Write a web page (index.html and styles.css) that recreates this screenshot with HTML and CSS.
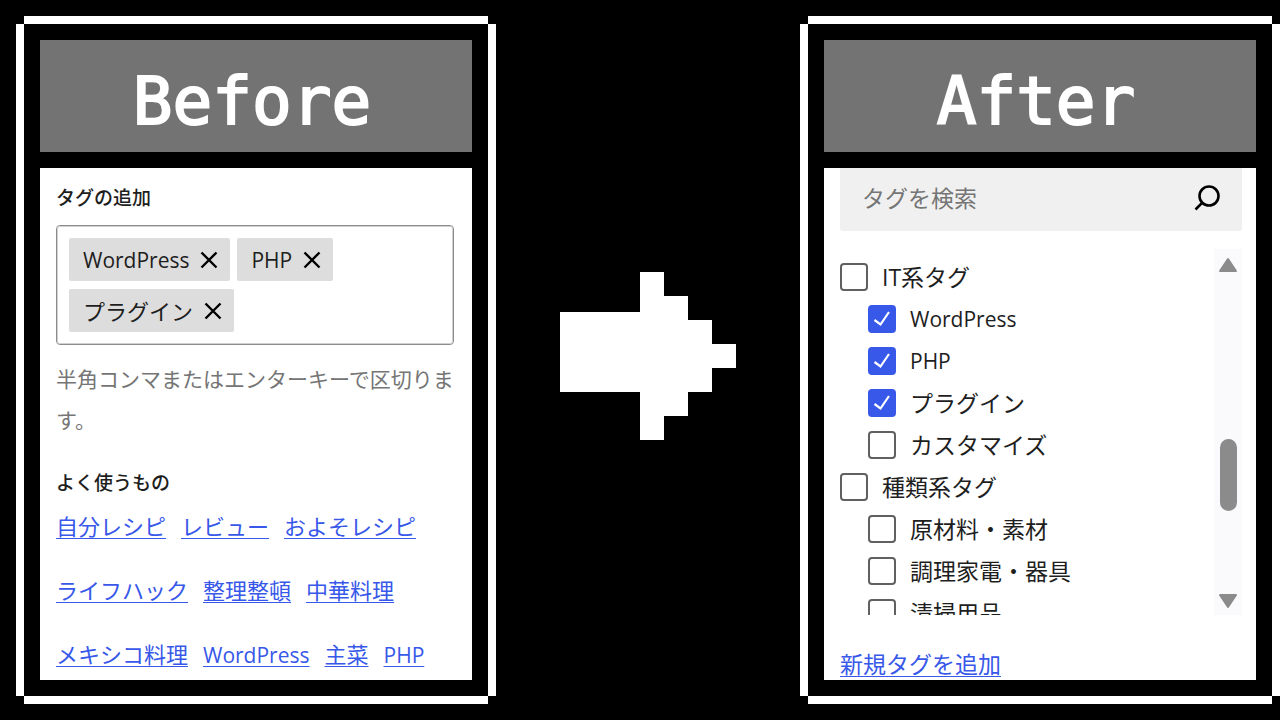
FILE: index.html
```
<!DOCTYPE html>
<html lang="ja">
<head>
  <meta charset="UTF-8">
  <meta name="viewport" content="width=device-width, initial-scale=1.0">
  <title>Before / After</title>
  <link rel="stylesheet" href="styles.css">
</head>
<body>
  <main class="compare">
    <section class="card">
      <h1 class="card-title">Before</h1>
      <div class="panel">
        <h2 class="label">タグの追加</h2>
        <div class="token-box">
          <span class="token latin">WordPress
            <button type="button" aria-label="WordPress を削除"><svg viewBox="0 0 18 18"><path d="M1.5 1.5l15 15M16.5 1.5l-15 15"/></svg></button>
          </span>
          <span class="token latin">PHP
            <button type="button" aria-label="PHP を削除"><svg viewBox="0 0 18 18"><path d="M1.5 1.5l15 15M16.5 1.5l-15 15"/></svg></button>
          </span>
          <span class="token">プラグイン
            <button type="button" aria-label="プラグイン を削除"><svg viewBox="0 0 18 18"><path d="M1.5 1.5l15 15M16.5 1.5l-15 15"/></svg></button>
          </span>
        </div>
        <p class="help">半角コンマまたはエンターキーで区切ります。</p>
        <h2 class="label">よく使うもの</h2>
        <div class="popular">
          <a href="#">自分レシピ</a>
          <a href="#">レビュー</a>
          <a href="#">およそレシピ</a>
          <a href="#">ライフハック</a>
          <a href="#">整理整頓</a>
          <a href="#">中華料理</a>
          <a href="#">メキシコ料理</a>
          <a class="latin" href="#">WordPress</a>
          <a href="#">主菜</a>
          <a class="latin" href="#">PHP</a>
        </div>
      </div>
    </section>

    <svg class="arrow" viewBox="0 0 22 21" shape-rendering="crispEdges" aria-hidden="true">
      <path d="M0 5h10V0h3v3h3v3h3v3h3v3h-3v3h-3v3h-3v3h-3v-6H0z"/>
    </svg>

    <section class="card">
      <h1 class="card-title">After</h1>
      <div class="panel panel-after">
        <form class="search">
          <input type="text" placeholder="タグを検索" aria-label="タグを検索">
          <button type="button" aria-label="検索">
            <svg viewBox="0 0 26 26"><circle cx="15" cy="11" r="9.5"/><path d="M8.3 17.7L1.5 24.5"/></svg>
          </button>
        </form>
        <div class="list-wrap">
          <ul class="list">
            <li><label><input type="checkbox">IT系タグ</label>
              <ul>
                <li><label class="latin"><input type="checkbox" checked>WordPress</label></li>
                <li><label class="latin"><input type="checkbox" checked>PHP</label></li>
                <li><label><input type="checkbox" checked>プラグイン</label></li>
                <li><label><input type="checkbox">カスタマイズ</label></li>
              </ul>
            </li>
            <li><label><input type="checkbox">種類系タグ</label>
              <ul>
                <li><label><input type="checkbox">原材料・素材</label></li>
                <li><label><input type="checkbox">調理家電・器具</label></li>
                <li><label><input type="checkbox">清掃用品</label></li>
              </ul>
            </li>
          </ul>
          <div class="scrollbar" aria-hidden="true">
            <svg viewBox="0 0 20 16"><path d="M10 2L18 14H2z"/></svg>
            <div class="track"><div class="thumb"></div></div>
            <svg viewBox="0 0 20 16"><path d="M2 2h16l-8 12z"/></svg>
          </div>
        </div>
        <a class="add-link" href="#">新規タグを追加</a>
      </div>
    </section>
  </main>
</body>
</html>
```
FILE: styles.css
```
* {
  box-sizing: border-box;
}

body {
  margin: 0;
  background-color: #000;
  color: #1e1e1e;
  font-family: "Open Sans", "Noto Sans CJK JP", sans-serif;
  font-size: 22px;
}

h1, h2, p, ul {
  margin: 0;
  padding: 0;
}

ul {
  list-style: none;
}

a {
  color: #3858e9;
  text-decoration: underline;
  text-decoration-thickness: 1px;
  text-underline-offset: 3px;
}

button {
  padding: 0;
  border: none;
  background: none;
  cursor: pointer;
}

.latin {
  font-size: 21px;
}

.compare {
  display: grid;
  grid-template-columns: 30fr 19fr 30fr;
  height: 100vh;
  padding: 16px 0 16px 16px;
}

/* white frame with the corner pixels cut off */
.card {
  display: flex;
  flex-direction: column;
  gap: 16px;
  min-width: 0;
  min-height: 0;
  padding: 16px;
  border: 8px solid #fff;
  clip-path: polygon(8px 0, calc(100% - 8px) 0, calc(100% - 8px) 8px, 100% 8px, 100% calc(100% - 8px), calc(100% - 8px) calc(100% - 8px), calc(100% - 8px) 100%, 8px 100%, 8px calc(100% - 8px), 0 calc(100% - 8px), 0 8px, 8px 8px);
}

.card-title {
  flex: none;
  padding: 12px 8px 0 0;
  background-color: #737373;
  color: #fff;
  font-family: "DejaVu Sans Mono", monospace;
  font-size: 66px;
  font-weight: normal;
  line-height: 100px;
  text-align: center;
  -webkit-text-stroke: 2px #fff;
}

.panel {
  flex: 1;
  min-height: 0;
  padding: 16px;
  overflow: hidden;
  background-color: #fff;
}

.label {
  font-size: 19px;
  font-weight: 500;
  line-height: 28px;
}

.token-box {
  display: flex;
  flex-wrap: wrap;
  gap: 8px 7px;
  margin: 13px 2px 14px 0;
  padding: 12px;
  border: 1px solid #8c8c8c;
  outline: 1px solid #d0d0d0;
  outline-offset: -2px;
  border-radius: 4px;
}

.token {
  display: flex;
  align-items: center;
  gap: 11px;
  height: 43px;
  padding: 0 12px 0 14px;
  border-radius: 2px;
  background-color: #ddd;
  line-height: 40px;
}

.token button {
  display: flex;
}

.token svg {
  width: 18px;
  height: 18px;
  fill: none;
  stroke: #000;
  stroke-width: 2.4;
}

.help {
  margin-bottom: 28px;
  color: #757575;
  font-size: 21px;
  line-height: 41px;
}

.popular {
  display: flex;
  flex-wrap: wrap;
  align-items: baseline;
  column-gap: 15px;
  margin-top: -3px;
  line-height: 64px;
}

.arrow {
  place-self: center;
  width: 176px;
  height: 168px;
  margin-bottom: 8px;
  fill: #fff;
}

.panel-after {
  padding-top: 0;
  font-size: 23px;
}

.search {
  display: flex;
  align-items: center;
  height: 63px;
  margin-right: -2px;
  padding: 0 22px 4px;
  border-radius: 0 0 3px 3px;
  background-color: #f0f0f0;
}

.search input {
  flex: 1;
  min-width: 0;
  padding: 0;
  border: none;
  outline: none;
  background: none;
  font: inherit;
}

.search input::placeholder {
  color: #757575;
}

.search button {
  display: flex;
}

.search svg {
  width: 26px;
  height: 26px;
  fill: none;
  stroke: #000;
  stroke-width: 2.6;
}

.list-wrap {
  display: flex;
  height: 366px;
  margin: 18px -2px 27px 0;
  overflow: hidden;
}

.list {
  flex: 1;
  padding-top: 7px;
}

.list ul {
  padding-left: 28px;
}

.list label {
  display: flex;
  align-items: center;
  gap: 14px;
  height: 42px;
  line-height: 40px;
}

.list input {
  -webkit-appearance: none;
  appearance: none;
  width: 28px;
  height: 28px;
  margin: 0;
  border: 2px solid #606060;
  border-radius: 4px;
}

.list input:checked {
  border-color: #3858e9;
  background: #3858e9 url("data:image/svg+xml,%3Csvg xmlns='http://www.w3.org/2000/svg' viewBox='0 0 24 24'%3E%3Cpath d='M4.5 13l6 4.5L19 5' fill='none' stroke='white' stroke-width='2.2'/%3E%3C/svg%3E") center / 24px no-repeat;
}

.scrollbar {
  display: flex;
  flex-direction: column;
  align-items: center;
  width: 28px;
  padding: 8px 0 6px;
  background-color: #fafafd;
}

.scrollbar svg {
  width: 20px;
  height: 16px;
  fill: #8b8b8b;
  stroke: #8b8b8b;
  stroke-width: 2;
  stroke-linejoin: round;
}

.track {
  flex: 1;
  padding-top: 166px;
}

.thumb {
  width: 17px;
  height: 72px;
  border-radius: 9px;
  background-color: #8b8b8b;
}

.add-link {
  display: block;
  line-height: 44px;
}
```
